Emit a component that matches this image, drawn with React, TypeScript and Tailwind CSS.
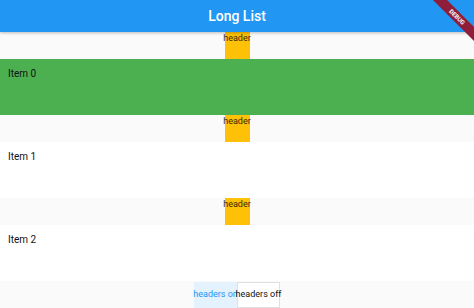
import React from "react";

const items = [0, 1, 2];

function HeaderRow() {
  return (
    <div className="h-[27px] bg-[#fafafa] flex justify-center">
      <div className="w-[25px] h-full bg-[#ffc107] text-[9px] leading-[12px] text-[#3a2a00] flex justify-center overflow-visible whitespace-nowrap">
        header
      </div>
    </div>
  );
}

export default function App() {
  return (
    <div
      className="relative w-[474px] h-[308px] overflow-hidden bg-white flex flex-col"
      style={{ fontFamily: "Roboto, 'Noto Sans', sans-serif" }}
    >
      <div className="h-[32px] bg-[#2196f3] shadow-[0_1px_3px_rgba(0,0,0,0.25)] z-10 flex items-center justify-center shrink-0">
        <span className="text-white text-[14px] font-medium">Long List</span>
      </div>
      {items.map((i) => (
        <React.Fragment key={i}>
          <HeaderRow />
          <div
            className={
              "h-[56px] shrink-0 px-2 pt-[7px] text-[10px] text-[#111] " +
              (i === 0 ? "bg-[#4caf50]" : "bg-white")
            }
          >
            Item {i}
          </div>
        </React.Fragment>
      ))}
      <div className="flex-1 bg-[#fafafa] flex justify-center items-end">
        <div className="h-[26px] w-[43px] bg-[#e3f2fd] text-[#2196f3] text-[9px] flex items-center justify-center whitespace-nowrap">
          headers on
        </div>
        <div className="h-[26px] w-[43px] bg-white border border-[#e0e0e0] text-[#111] text-[9px] flex items-center justify-center whitespace-nowrap">
          headers off
        </div>
      </div>
      <div className="absolute top-[12px] right-[-18px] w-[70px] h-[10px] bg-[#8e1e3a] rotate-45 flex items-center justify-center z-20">
        <span className="text-white text-[6px] font-bold leading-none">DEBUG</span>
      </div>
    </div>
  );
}
